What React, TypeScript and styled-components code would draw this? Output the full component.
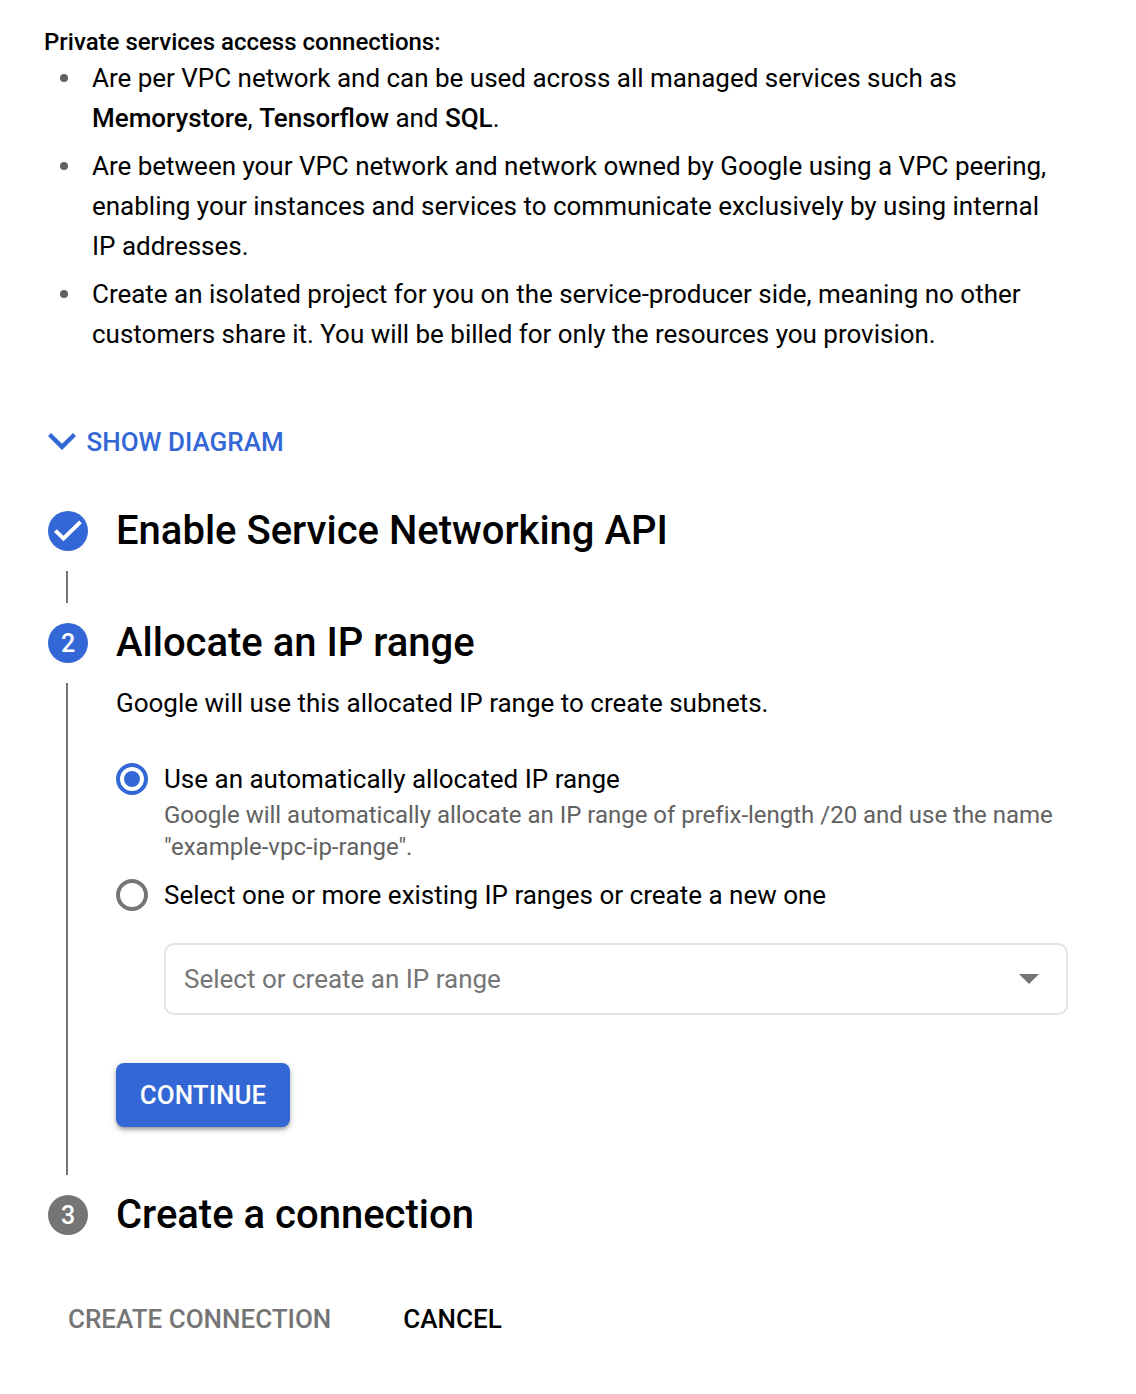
import React, { useState } from "react";
import styled, { createGlobalStyle } from "styled-components";

const GlobalStyle = createGlobalStyle`
  *, *::before, *::after { box-sizing: border-box; }
  body { margin: 0; background: #fff; color: #000; font-family: Roboto, "Liberation Sans", sans-serif; }
`;

const Page = styled.main`
  width: 1136px;
  height: 1394px;
  padding: 26px 68px 0 44px;
  font-size: 26px;
  line-height: 40px;
`;

const Intro = styled.h2`
  margin: 0;
  font-size: 24px;
  font-weight: 500;
  line-height: 32px;
`;

const Points = styled.ul`
  list-style: none;
  margin: 0;
  padding: 0;
  display: flex;
  flex-direction: column;
  gap: 8px;
`;

const Point = styled.li`
  display: grid;
  grid-template-columns: 8px 1fr;
  column-gap: 24px;
  padding-left: 16px;
  white-space: nowrap;
  letter-spacing: -0.012px;
  &::before {
    content: "";
    width: 8px;
    height: 8px;
    margin-top: 16px;
    border-radius: 50%;
    background: #616161;
  }
`;

const Line = styled.span`
  display: block;
`;

const Strong = styled.strong`
  font-weight: 500;
  letter-spacing: 0;
`;

const TextButton = styled.button<{ $color: string }>`
  display: flex;
  align-items: center;
  padding: 0;
  border: 0;
  background: none;
  font: 500 26px/40px Roboto, "Liberation Sans", sans-serif;
  color: ${(p) => p.$color};
  white-space: nowrap;
`;

const DiagramToggle = styled(TextButton)`
  margin: 68px 0 0 4px;
  gap: 10.5px;
`;

const Steps = styled.div`
  display: flex;
  flex-direction: column;
  margin-top: 49px;
  padding-left: 4px;
`;

const Step = styled.section`
  display: grid;
  grid-template-columns: 40px 1fr;
  column-gap: 28px;
`;

const Marker = styled.div<{ $muted?: boolean }>`
  width: 40px;
  height: 40px;
  border-radius: 50%;
  display: flex;
  align-items: center;
  justify-content: center;
  background: ${(p) => (p.$muted ? "#757575" : "#3367d6")};
  color: #fff;
`;

const Numeral = styled.span`
  padding-top: 2px;
  font-size: 25px;
  font-weight: 500;
  line-height: 40px;
`;

const Title = styled.h3`
  margin: 0;
  font-size: 40px;
  font-weight: 500;
  line-height: 40px;
  white-space: nowrap;
`;

const Connector = styled.div<{ $height: number }>`
  width: 2px;
  height: ${(p) => p.$height}px;
  margin: 20px 0 20px 18px;
  background: #757575;
`;

const Body = styled.div`
  padding-top: 20px;
`;

const Description = styled.p`
  margin: 0;
`;

const Options = styled.div`
  margin-top: 36px;
`;

const Option = styled.label`
  display: flex;
  align-items: center;
  gap: 16px;
  white-space: nowrap;
`;

const Radio = styled.input`
  appearance: none;
  width: 32px;
  height: 32px;
  margin: 0;
  border: 4px solid #757575;
  border-radius: 50%;
  display: grid;
  place-items: center;
  &:checked { border-color: #3367d6; }
  &:checked::before {
    content: "";
    width: 16px;
    height: 16px;
    border-radius: 50%;
    background: #3367d6;
  }
`;

const Hint = styled.p`
  margin: 0 0 12px;
  padding-left: 48px;
  font-size: 24px;
  line-height: 32px;
  letter-spacing: -0.01px;
  color: #616161;
  white-space: nowrap;
`;

const Select = styled.button`
  display: flex;
  align-items: center;
  justify-content: space-between;
  width: 904px;
  height: 72px;
  margin: 28px 0 0 48px;
  padding: 0 27px 0 18px;
  border: 2px solid #e3e3e3;
  border-radius: 10px;
  background: #fff;
  color: #757575;
  font: 400 26px/40px Roboto, "Liberation Sans", sans-serif;
`;

const Primary = styled.button`
  width: 174px;
  height: 64px;
  display: block;
  margin-top: 48px;
  padding: 0;
  border: 0;
  border-radius: 8px;
  background: #3367d6;
  color: #fff;
  font: 500 26px/40px Roboto, "Liberation Sans", sans-serif;
  box-shadow: 0 3px 4px -1px rgba(0, 0, 0, 0.35), 0 2px 8px rgba(0, 0, 0, 0.16);
`;

const Actions = styled.footer`
  display: flex;
  gap: 72px;
  margin-top: 64px;
  padding-left: 24px;
`;

export default function App() {
  const [mode, setMode] = useState("auto");
  return (
    <>
      <GlobalStyle />
      <Page>
        <Intro>Private services access connections:</Intro>
        <Points>
          <Point>
            <div>
              <Line>Are per VPC network and can be used across all managed services such as</Line>
              <Line><Strong>Memorystore</Strong>, <Strong>Tensorflow</Strong> and <Strong>SQL</Strong>.</Line>
            </div>
          </Point>
          <Point>
            <div>
              <Line>Are between your VPC network and network owned by Google using a VPC peering,</Line>
              <Line>enabling your instances and services to communicate exclusively by using internal</Line>
              <Line>IP addresses.</Line>
            </div>
          </Point>
          <Point>
            <div>
              <Line>Create an isolated project for you on the service-producer side, meaning no other</Line>
              <Line>customers share it. You will be billed for only the resources you provision.</Line>
            </div>
          </Point>
        </Points>
        <DiagramToggle $color="#3367d6">
          <svg width="28" height="18" viewBox="0 0 28 18" fill="#3367d6">
            <path d="M0 3 3 0 14 10.7 25 0 28 3 14 17z" />
          </svg>
          SHOW DIAGRAM
        </DiagramToggle>
        <Steps>
          <Step>
            <Marker>
              <svg width="40" height="40" viewBox="0 0 40 40" fill="#fff">
                <path d="M6 21.1 8.8 18.3 15.5 24.7 31.1 9.4 33.9 12.2 15.5 30.3z" />
              </svg>
            </Marker>
            <Title>Enable Service Networking API</Title>
            <Connector $height={32} />
          </Step>
          <Step>
            <Marker><Numeral>2</Numeral></Marker>
            <Title>Allocate an IP range</Title>
            <Connector $height={492} />
            <Body>
              <Description>Google will use this allocated IP range to create subnets.</Description>
              <Options>
                <Option>
                  <Radio type="radio" name="range" checked={mode === "auto"} onChange={() => setMode("auto")} />
                  Use an automatically allocated IP range
                </Option>
                <Hint>
                  <Line>Google will automatically allocate an IP range of prefix-length /20 and use the name</Line>
                  <Line>"example-vpc-ip-range".</Line>
                </Hint>
                <Option>
                  <Radio type="radio" name="range" checked={mode === "manual"} onChange={() => setMode("manual")} />
                  Select one or more existing IP ranges or create a new one
                </Option>
              </Options>
              <Select>
                Select or create an IP range
                <svg width="20" height="10" viewBox="0 0 20 10" fill="#757575"><path d="M0 0h20L10 10z" /></svg>
              </Select>
              <Primary>CONTINUE</Primary>
            </Body>
          </Step>
          <Step>
            <Marker $muted><Numeral>3</Numeral></Marker>
            <Title>Create a connection</Title>
          </Step>
        </Steps>
        <Actions>
          <TextButton $color="#757575">CREATE CONNECTION</TextButton>
          <TextButton $color="#000">CANCEL</TextButton>
        </Actions>
      </Page>
    </>
  );
}
